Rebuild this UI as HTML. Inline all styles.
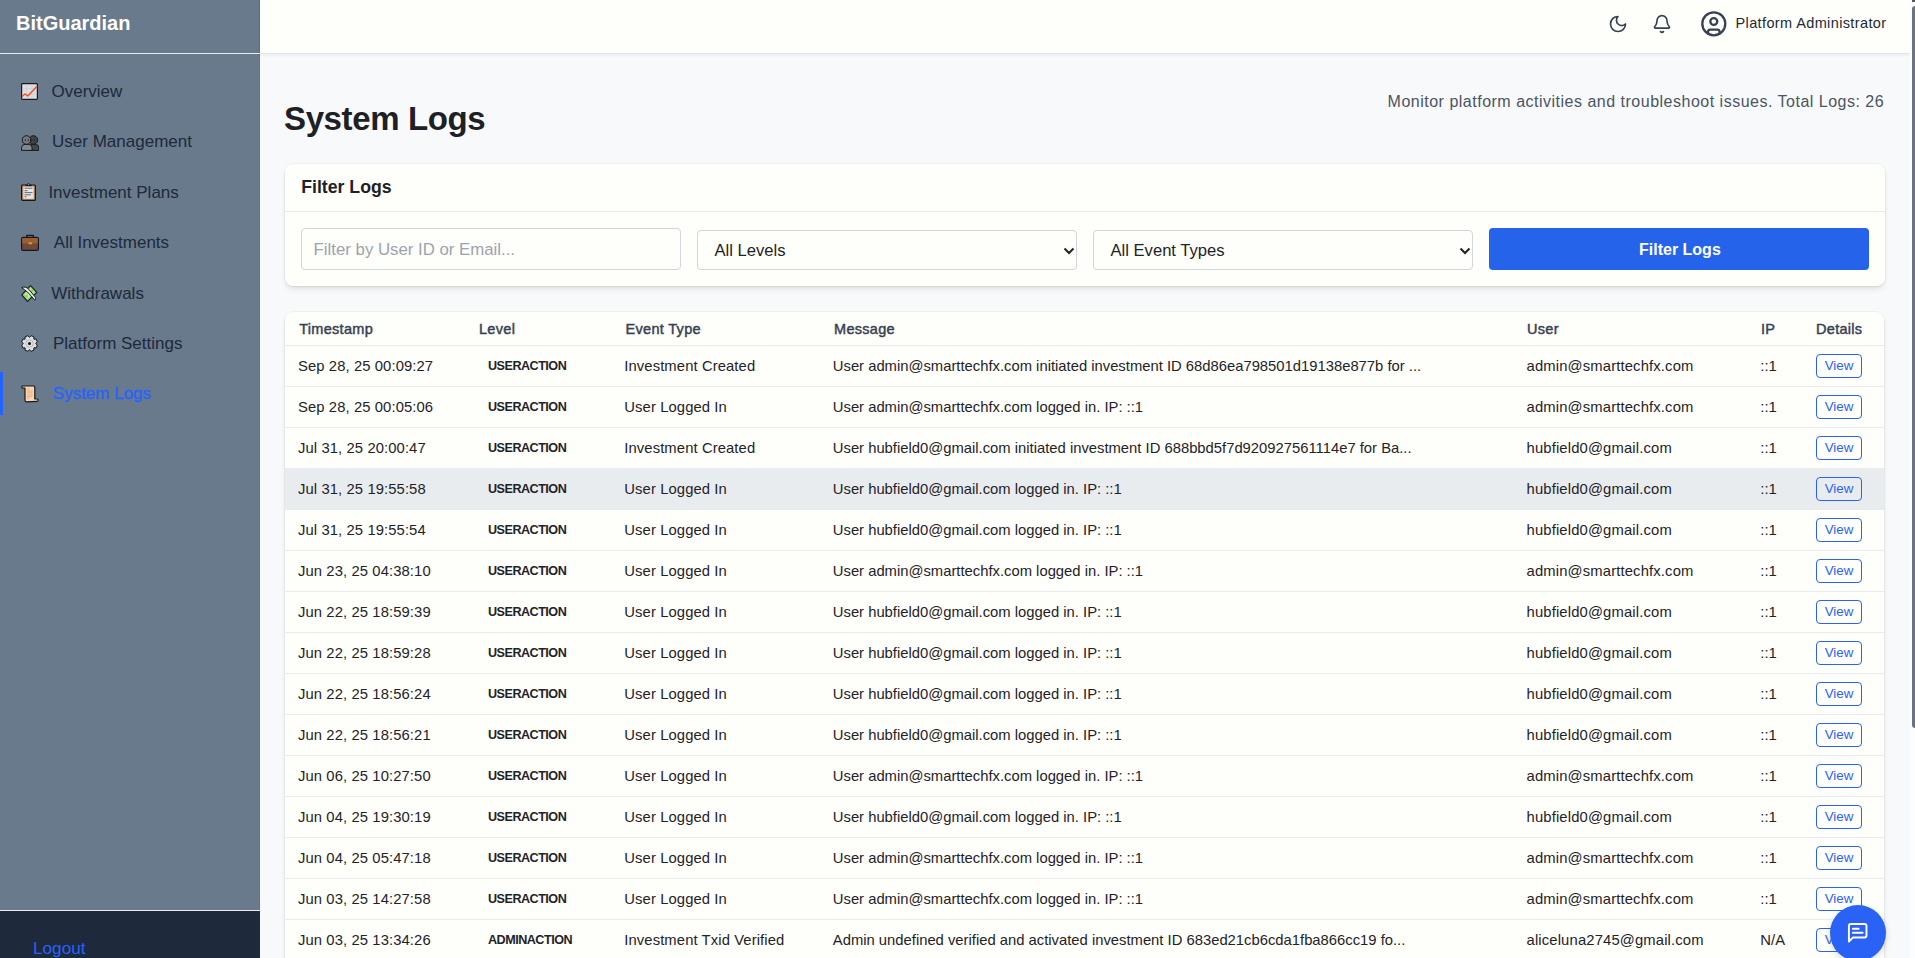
<!DOCTYPE html>
<html><head><meta charset="utf-8"><title>System Logs - BitGuardian</title>
<style>
*{box-sizing:border-box;margin:0;padding:0}
html,body{width:1915px;height:958px;overflow:hidden}
body{font-family:"Liberation Sans",sans-serif;background:#f8f9fa;color:#1f2937;position:relative}
.t{position:absolute;line-height:1;white-space:nowrap}
svg{position:absolute;display:block}
#sb{position:absolute;left:0;top:0;width:260px;height:958px;background:#687a8c;border-right:1px solid #5f7186}
#sb .brand{left:16px;top:13px;font-size:20px;font-weight:700;color:#fff}
#sb .bl{position:absolute;left:0;top:53px;width:260px;height:1px;background:#e9ecef}
.nv{font-size:17px;color:#1e293b}
.nv.act{color:#2563ff;-webkit-text-stroke:0.3px #2563ff}
#abar{position:absolute;left:0;top:372px;width:3px;height:43px;background:#2563ff}
#sbf{position:absolute;left:0;top:910px;width:260px;height:48px;background:#1e293b;border-top:1px solid #e9ecef}
#lo{left:33px;top:29.3px;font-size:17.2px;color:#2563ff}
#hd{position:absolute;left:260px;top:0;width:1650px;height:54px;background:#fefefa;border-bottom:1px solid #e3e6ea;box-shadow:0 1px 3px rgba(0,0,0,.07)}
#adm{left:1475.5px;top:15.9px;font-size:14.5px;letter-spacing:0.38px;color:#1f2937}
#title{left:284px;top:102px;font-size:33px;font-weight:700;letter-spacing:-0.38px;color:#1d2125}
#sub{left:1387.6px;top:94.2px;font-size:16px;letter-spacing:0.5px;color:#4b5563}
.card{position:absolute;background:#fefefa;border-radius:8px;box-shadow:0 0 0 1px rgba(0,0,0,.035),0 4px 6px -1px rgba(0,0,0,.09),0 2px 4px -2px rgba(0,0,0,.08)}
#fc{left:285px;top:164px;width:1600px;height:122px}
#fch{left:16.2px;top:15.2px;font-size:17.7px;font-weight:700;color:#1d2125}
#fcl{position:absolute;left:0;top:47px;width:1600px;height:1px;background:#e7e9ec}
.inp{position:absolute;border:1px solid #cfd6de;border-radius:4px;background:#fefefa}
#in1{left:16px;top:64px;width:380px;height:42px}
#ph{left:11.6px;top:13px;font-size:16.8px;color:#9ca3af}
#se1{left:412px;top:66px;width:380px;height:40px}
#se2{left:808px;top:66px;width:380px;height:40px}
.sv{left:16.5px;top:12px;font-size:16.6px;color:#1f2328}
.chev{right:3px;top:16px}
#btn{position:absolute;left:1204px;top:64px;width:380px;height:42px;background:#2563eb;border-radius:4px}
#btnt{left:150px;top:14.4px;font-size:16px;font-weight:700;color:#fff}
#tc{left:285px;top:312px;width:1599px;height:700px}
.th{top:9.8px;font-size:14.5px;font-weight:400;letter-spacing:0.3px;color:#374151;-webkit-text-stroke:0.45px #374151}
#thl{position:absolute;left:0;top:33px;width:1599px;height:1px;background:#e7e9ec}
.row{position:absolute;left:0;width:1599px;height:41px;border-bottom:1px solid #e9ebee}
.row.hl{background:#e9ecef}
.c{position:absolute;top:13.4px;line-height:1;white-space:nowrap;font-size:14.8px;letter-spacing:0.1px;color:#1f2328}
.c1{left:13px}.c3{left:339.3px}.c4{left:547.8px;letter-spacing:0}.c5{left:1241.5px;letter-spacing:0.15px}.c6{left:1475.2px}
.lv{left:203px;top:13.6px;font-size:12.6px;font-weight:700;letter-spacing:-0.5px;color:#1f2328}
.vb{position:absolute;left:1531px;top:7.8px;width:46px;height:24px;border:1px solid #2b62f5;border-radius:4px;font-size:13.33px;color:#2b62f5;line-height:22px;text-align:center}
#fab{position:absolute;left:1830px;top:905px;width:56px;height:56px;border-radius:50%;background:#2962f5;box-shadow:0 2px 6px rgba(0,0,0,.15)}
#scr{position:absolute;left:1910px;top:0;width:5px;height:958px;background:#fdfdfd}
#thumb{position:absolute;left:1912px;top:6px;width:6px;height:722px;background:#6b7582;border-radius:3px}
</style></head><body>
<div id="sb">
  <div class="t brand">BitGuardian</div>
  <div class="bl"></div>
  <div id="abar"></div>
  <!-- chart increasing -->
  <svg style="left:21px;top:83px" width="17" height="17" viewBox="0 0 17 17">
    <rect x="0.6" y="0.6" width="15.8" height="15.8" rx="0.8" fill="#d9dee1" stroke="#161b21" stroke-width="1.2"/>
    <path d="M5.5 1v15M11 1v15M1 5.5h15M1 11h15" stroke="#c4cacf" stroke-width="0.5"/>
    <polyline points="1,13.5 4,11 6.8,13 16,3.3" fill="none" stroke="#ff4a1c" stroke-width="1.4" stroke-linejoin="round"/>
  </svg>
  <div class="t nv" style="left:51.5px;top:83.1px">Overview</div>
  <!-- busts -->
  <svg style="left:21px;top:134.5px" width="18" height="16" viewBox="0 0 18 16">
    <path d="M8 15.4v-2.6a3.4 3.4 0 0 1 3.4-3.4h3a3.4 3.4 0 0 1 3.4 3.4v2.6z" fill="#45484c" stroke="#15191e" stroke-width="1"/>
    <circle cx="12.4" cy="5" r="4.3" fill="#404347" stroke="#15191e" stroke-width="1"/>
    <path d="M0.5 15.4v-2.6a3.4 3.4 0 0 1 3.4-3.4h3.8a3.4 3.4 0 0 1 3.4 3.4v2.6z" fill="#85888b" stroke="#15191e" stroke-width="1"/>
    <circle cx="5.5" cy="5" r="4.3" fill="#75787b" stroke="#15191e" stroke-width="1"/>
    <path d="M4.3 4.4v1.5M7.3 4.4v1.5M10.8 4.4v1.5M13.6 4.4v1.5" stroke="#15191e" stroke-width="0.9"/>
  </svg>
  <div class="t nv" style="left:52.1px;top:133.4px">User Management</div>
  <!-- clipboard -->
  <svg style="left:21px;top:183px" width="15" height="18" viewBox="0 0 15 18">
    <rect x="0.6" y="2" width="13.8" height="15.4" rx="1" fill="#c98a4e" stroke="#14181d" stroke-width="1.2"/>
    <rect x="2.3" y="3.6" width="10.4" height="12.2" fill="#e3e6e8"/>
    <path d="M3.5 5.2h8M3.5 7.7h3M3.5 9.6h8M3.5 11.8h6.5M3.5 13.8h2" stroke="#4a4d51" stroke-width="0.8"/>
    <path d="M4.5 2.6 7.5 0.6 10.5 2.6z" fill="#9aa0a6" stroke="#14181d" stroke-width="1"/>
  </svg>
  <div class="t nv" style="left:48.4px;top:183.6px">Investment Plans</div>
  <!-- briefcase -->
  <svg style="left:21px;top:234px" width="18" height="17" viewBox="0 0 18 17">
    <path d="M5.8 4V1.3h6.4V4" fill="none" stroke="#14181d" stroke-width="1.3"/>
    <rect x="0.6" y="3.4" width="16.8" height="13" rx="1.4" fill="#6f4a3a" stroke="#14181d" stroke-width="1.2"/>
    <rect x="1.2" y="4" width="15.6" height="5.4" fill="#9a5d35"/>
    <rect x="7.5" y="8.3" width="3.6" height="2" fill="#d4a017"/>
  </svg>
  <div class="t nv" style="left:53.8px;top:233.9px">All Investments</div>
  <!-- money with wings -->
  <svg style="left:21px;top:285px" width="17" height="17" viewBox="0 0 17 17">
    <polygon points="9.5,0.6 15.8,7.3 6.5,16.3 0.8,9.8" fill="#9ede6c" stroke="#14181d" stroke-width="1.1" stroke-linejoin="round"/>
    <polygon points="9.5,2.6 13.8,7.3 6.5,14.3 2.8,9.8" fill="#c3ec9c" stroke="#7f9a70" stroke-width="0.5" stroke-dasharray="0.8 0.6"/>
    <circle cx="11" cy="6.3" r="1.4" fill="#8fd45c"/><circle cx="5.6" cy="11.2" r="1.4" fill="#8fd45c"/>
    <path d="M0.7 2.7C3 1.4 5.6 2.1 7.6 4.1L13.9 11.6C14.8 12.9 14.7 14.4 13.7 15.3C11.6 12.3 9 9.3 6.2 6.9C4.6 5.4 2.6 4.1 0.7 2.7z" fill="#e6e8ea" stroke="#14181d" stroke-width="1" stroke-linejoin="round"/>
  </svg>
  <div class="t nv" style="left:51.3px;top:285px">Withdrawals</div>
  <!-- gear -->
  <svg style="left:21px;top:335px" width="17" height="17" viewBox="0 0 17 17">
    <path d="M14.70 8.58 L16.35 10.03 L15.14 12.97 L12.94 12.83 L12.83 12.94 L12.97 15.14 L10.03 16.35 L8.58 14.70 L8.42 14.70 L6.97 16.35 L4.03 15.14 L4.17 12.94 L4.06 12.83 L1.86 12.97 L0.65 10.03 L2.30 8.58 L2.30 8.42 L0.65 6.97 L1.86 4.03 L4.06 4.17 L4.17 4.06 L4.03 1.86 L6.97 0.65 L8.42 2.30 L8.58 2.30 L10.03 0.65 L12.97 1.86 L12.83 4.06 L12.94 4.17 L15.14 4.03 L16.35 6.97 L14.70 8.42Z" fill="#dcdfe1" stroke="#14181d" stroke-width="1" stroke-linejoin="round"/>
    <circle cx="8.5" cy="8.5" r="3.7" fill="none" stroke="#a9adb0" stroke-width="0.7"/>
    <circle cx="8.5" cy="8.5" r="1.5" fill="#111"/>
  </svg>
  <div class="t nv" style="left:53px;top:335.4px">Platform Settings</div>
  <!-- scroll -->
  <svg style="left:21px;top:384.5px" width="18" height="18" viewBox="0 0 18 18">
    <path d="M2 1h10.5a1.3 1.3 0 0 1 1.3 1.3V14h2.2a1.2 1.2 0 0 1 0 2.4L5.5 16.8a1.5 1.5 0 0 1-1.5-1.5V3.2H1.6a1.1 1.1 0 0 1 0.4-2.2z" fill="#fdd5b1" stroke="#14181d" stroke-width="1.2" stroke-linejoin="round"/>
    <path d="M6 3.8h2.5M6 6h5.8M6 7.8h5.5M6 9.9h5.8M6 11.6h5.5M6 13.4h2" stroke="#d9a070" stroke-width="0.7"/>
  </svg>
  <div class="t nv act" style="left:52.8px;top:384.6px">System Logs</div>
</div>
<div id="sbf"><div class="t" id="lo">Logout</div></div>

<div id="hd">
  <svg style="left:1347.9px;top:14.2px" width="20" height="20" viewBox="0 0 24 24" fill="none" stroke="#374151" stroke-width="2" stroke-linecap="round" stroke-linejoin="round"><path d="M12 3a6 6 0 0 0 9 9 9 9 0 1 1-9-9Z"/></svg>
  <svg style="left:1392px;top:14px" width="20" height="20" viewBox="0 0 24 24" fill="none" stroke="#374151" stroke-width="2" stroke-linecap="round" stroke-linejoin="round"><path d="M10.268 21a2 2 0 0 0 3.464 0"/><path d="M3.262 15.326A1 1 0 0 0 4 17h16a1 1 0 0 0 .74-1.673C19.41 13.956 18 12.499 18 8A6 6 0 0 0 6 8c0 4.499-1.411 5.956-2.738 7.326"/></svg>
  <svg style="left:1440.15px;top:9.85px" width="27.6" height="27.6" viewBox="0 0 24 24" fill="none" stroke="#374151" stroke-width="2" stroke-linecap="round" stroke-linejoin="round"><circle cx="12" cy="12" r="10"/><circle cx="12" cy="10" r="3"/><path d="M7 20.662V19a2 2 0 0 1 2-2h6a2 2 0 0 1 2 2v1.662"/></svg>
  <div class="t" id="adm">Platform Administrator</div>
</div>

<div class="t" id="title">System Logs</div>
<div class="t" id="sub">Monitor platform activities and troubleshoot issues. Total Logs: 26</div>

<div class="card" id="fc">
  <div class="t" id="fch">Filter Logs</div>
  <div id="fcl"></div>
  <div class="inp" id="in1"><div class="t" id="ph">Filter by User ID or Email...</div></div>
  <div class="inp" id="se1"><div class="t sv">All Levels</div>
    <svg class="chev" style="left:364.5px;top:16px" width="12" height="8" viewBox="0 0 12 8"><path d="M1.5 1.5 6 6 10.5 1.5" fill="none" stroke="#1f2328" stroke-width="2"/></svg></div>
  <div class="inp" id="se2"><div class="t sv">All Event Types</div>
    <svg class="chev" style="left:364.5px;top:16px" width="12" height="8" viewBox="0 0 12 8"><path d="M1.5 1.5 6 6 10.5 1.5" fill="none" stroke="#1f2328" stroke-width="2"/></svg></div>
  <div id="btn"><div class="t" id="btnt">Filter Logs</div></div>
</div>

<div class="card" id="tc">
  <div class="t th" style="left:14.2px">Timestamp</div>
  <div class="t th" style="left:194px">Level</div>
  <div class="t th" style="left:340.6px">Event Type</div>
  <div class="t th" style="left:549px">Message</div>
  <div class="t th" style="left:1242px">User</div>
  <div class="t th" style="left:1476px">IP</div>
  <div class="t th" style="left:1531px">Details</div>
  <div id="thl"></div>
<div class="row" style="top:34px"><span class="c c1">Sep 28, 25 00:09:27</span><span class="c lv">USERACTION</span><span class="c c3">Investment Created</span><span class="c c4">User admin@smarttechfx.com initiated investment ID 68d86ea798501d19138e877b for ...</span><span class="c c5">admin@smarttechfx.com</span><span class="c c6">::1</span><span class="vb">View</span></div>
<div class="row" style="top:75px"><span class="c c1">Sep 28, 25 00:05:06</span><span class="c lv">USERACTION</span><span class="c c3">User Logged In</span><span class="c c4">User admin@smarttechfx.com logged in. IP: ::1</span><span class="c c5">admin@smarttechfx.com</span><span class="c c6">::1</span><span class="vb">View</span></div>
<div class="row" style="top:116px"><span class="c c1">Jul 31, 25 20:00:47</span><span class="c lv">USERACTION</span><span class="c c3">Investment Created</span><span class="c c4">User hubfield0@gmail.com initiated investment ID 688bbd5f7d920927561114e7 for Ba...</span><span class="c c5">hubfield0@gmail.com</span><span class="c c6">::1</span><span class="vb">View</span></div>
<div class="row hl" style="top:157px"><span class="c c1">Jul 31, 25 19:55:58</span><span class="c lv">USERACTION</span><span class="c c3">User Logged In</span><span class="c c4">User hubfield0@gmail.com logged in. IP: ::1</span><span class="c c5">hubfield0@gmail.com</span><span class="c c6">::1</span><span class="vb">View</span></div>
<div class="row" style="top:198px"><span class="c c1">Jul 31, 25 19:55:54</span><span class="c lv">USERACTION</span><span class="c c3">User Logged In</span><span class="c c4">User hubfield0@gmail.com logged in. IP: ::1</span><span class="c c5">hubfield0@gmail.com</span><span class="c c6">::1</span><span class="vb">View</span></div>
<div class="row" style="top:239px"><span class="c c1">Jun 23, 25 04:38:10</span><span class="c lv">USERACTION</span><span class="c c3">User Logged In</span><span class="c c4">User admin@smarttechfx.com logged in. IP: ::1</span><span class="c c5">admin@smarttechfx.com</span><span class="c c6">::1</span><span class="vb">View</span></div>
<div class="row" style="top:280px"><span class="c c1">Jun 22, 25 18:59:39</span><span class="c lv">USERACTION</span><span class="c c3">User Logged In</span><span class="c c4">User hubfield0@gmail.com logged in. IP: ::1</span><span class="c c5">hubfield0@gmail.com</span><span class="c c6">::1</span><span class="vb">View</span></div>
<div class="row" style="top:321px"><span class="c c1">Jun 22, 25 18:59:28</span><span class="c lv">USERACTION</span><span class="c c3">User Logged In</span><span class="c c4">User hubfield0@gmail.com logged in. IP: ::1</span><span class="c c5">hubfield0@gmail.com</span><span class="c c6">::1</span><span class="vb">View</span></div>
<div class="row" style="top:362px"><span class="c c1">Jun 22, 25 18:56:24</span><span class="c lv">USERACTION</span><span class="c c3">User Logged In</span><span class="c c4">User hubfield0@gmail.com logged in. IP: ::1</span><span class="c c5">hubfield0@gmail.com</span><span class="c c6">::1</span><span class="vb">View</span></div>
<div class="row" style="top:403px"><span class="c c1">Jun 22, 25 18:56:21</span><span class="c lv">USERACTION</span><span class="c c3">User Logged In</span><span class="c c4">User hubfield0@gmail.com logged in. IP: ::1</span><span class="c c5">hubfield0@gmail.com</span><span class="c c6">::1</span><span class="vb">View</span></div>
<div class="row" style="top:444px"><span class="c c1">Jun 06, 25 10:27:50</span><span class="c lv">USERACTION</span><span class="c c3">User Logged In</span><span class="c c4">User admin@smarttechfx.com logged in. IP: ::1</span><span class="c c5">admin@smarttechfx.com</span><span class="c c6">::1</span><span class="vb">View</span></div>
<div class="row" style="top:485px"><span class="c c1">Jun 04, 25 19:30:19</span><span class="c lv">USERACTION</span><span class="c c3">User Logged In</span><span class="c c4">User hubfield0@gmail.com logged in. IP: ::1</span><span class="c c5">hubfield0@gmail.com</span><span class="c c6">::1</span><span class="vb">View</span></div>
<div class="row" style="top:526px"><span class="c c1">Jun 04, 25 05:47:18</span><span class="c lv">USERACTION</span><span class="c c3">User Logged In</span><span class="c c4">User admin@smarttechfx.com logged in. IP: ::1</span><span class="c c5">admin@smarttechfx.com</span><span class="c c6">::1</span><span class="vb">View</span></div>
<div class="row" style="top:567px"><span class="c c1">Jun 03, 25 14:27:58</span><span class="c lv">USERACTION</span><span class="c c3">User Logged In</span><span class="c c4">User admin@smarttechfx.com logged in. IP: ::1</span><span class="c c5">admin@smarttechfx.com</span><span class="c c6">::1</span><span class="vb">View</span></div>
<div class="row" style="top:608px"><span class="c c1">Jun 03, 25 13:34:26</span><span class="c lv">ADMINACTION</span><span class="c c3">Investment Txid Verified</span><span class="c c4">Admin undefined verified and activated investment ID 683ed21cb6cda1fba866cc19 fo...</span><span class="c c5">aliceluna2745@gmail.com</span><span class="c c6">N/A</span><span class="vb">View</span></div>
</div>

<div id="fab"><svg style="left:16.35px;top:16px" width="23.4" height="23.4" viewBox="0 0 24 24" fill="none" stroke="#fff" stroke-width="2" stroke-linecap="round" stroke-linejoin="round"><path d="M21 15a2 2 0 0 1-2 2H7l-4 4V5a2 2 0 0 1 2-2h14a2 2 0 0 1 2 2z"/><path d="M13 8H7"/><path d="M17 12H7"/></svg></div>
<div id="scr"></div><div id="thumb"></div><div style="position:absolute;left:1911.5px;top:0;width:4px;height:1.5px;background:#4b5563"></div>
</body></html>
